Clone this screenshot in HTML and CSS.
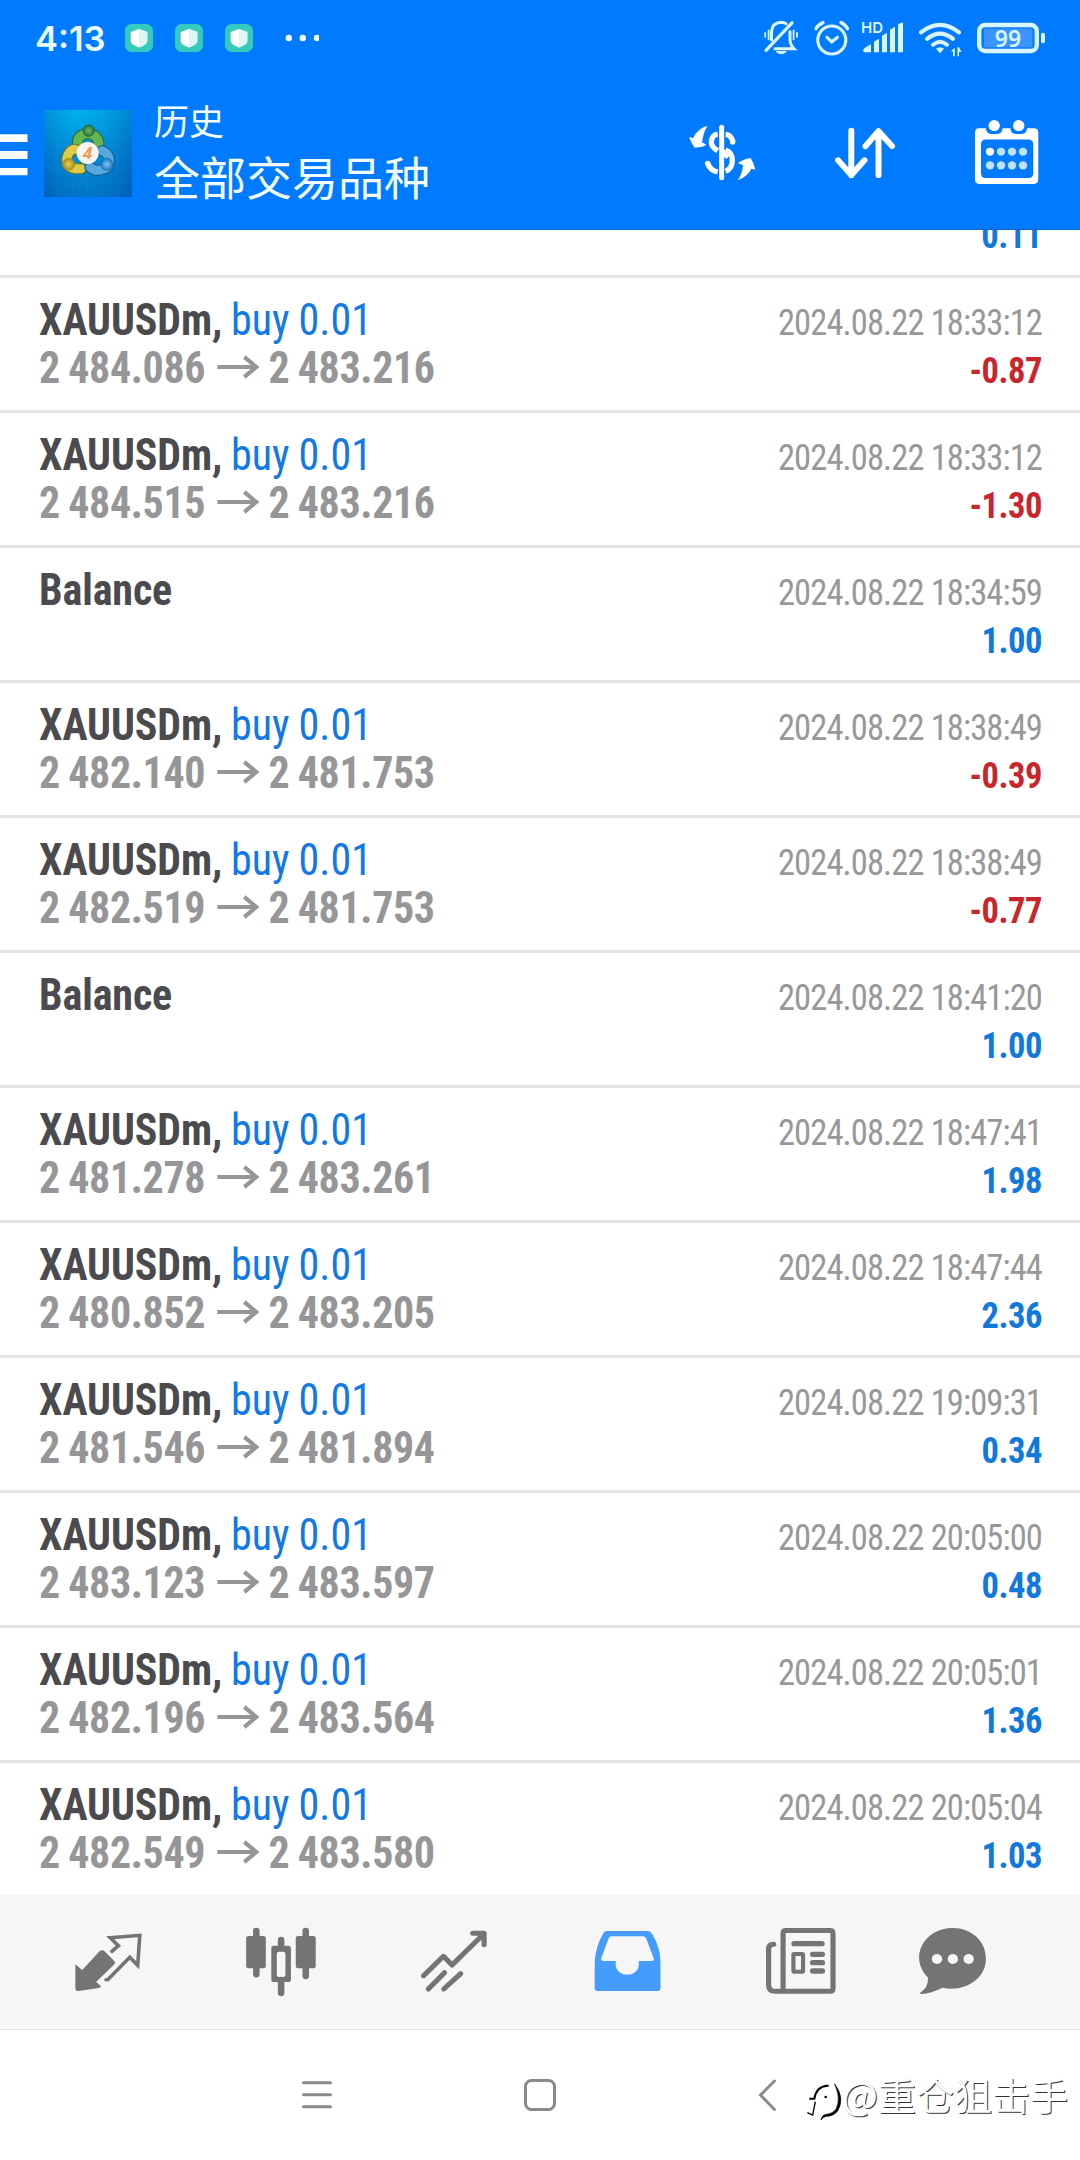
FILE: index.html
```html
<!DOCTYPE html>
<html lang="zh-CN">
<head>
<meta charset="utf-8">
<title>历史</title>
<link rel="stylesheet" href="styles.css">
</head>
<body>
<svg class="defs" width="0" height="0">
  <defs>
    <symbol id="arrow" viewBox="0 0 45 24"><path d="M0 12H42M29 2L42 12L29 22" fill="none" stroke="currentColor" stroke-width="4.200"/></symbol>
    <symbol id="shield" viewBox="0 0 28 28"><rect width="28" height="28" rx="6.500" fill="#35cbbc"/><path d="M14 5L22.300 8V17.500Q22 20.500 14 23.500Q6 20.500 5.700 17.500V8Z" fill="#fff"/><path d="M14 5L22.300 8V17.500Q22 20.500 14 23.500Z" fill="#dff5f5"/></symbol>
  </defs>
</svg>
<div class="screen">
  <header class="top">
    <div class="status">
      <span class="clock">4:13</span>
      <svg class="shield"><use href="#shield"/></svg>
      <svg class="shield"><use href="#shield"/></svg>
      <svg class="shield"><use href="#shield"/></svg>
      <svg class="more" viewBox="285 0 34 76" fill="#f4fcff"><circle cx="288.800" cy="38" r="3.200"/><circle cx="302.800" cy="38" r="3.200"/><circle cx="317" cy="38" r="3.200"/></svg>
      <svg class="sys" viewBox="755 1.200 305 76" width="305" height="76">
        <g fill="none" stroke="#d9f6ff" stroke-linecap="round">
          <path d="M771.500 41V33Q772 24 781 23.500Q784 23.500 786 25M775 50H794Q790 46 790 41V33" stroke-width="3"/>
          <path d="M766 51.500L792 24" stroke-width="3.200"/>
          <path d="M765.200 34V38M768.600 31.500V40.500M793.600 31.500V40.500M797 34V38" stroke-width="1.800"/>
          <path d="M776.500 53Q781 57 786 53Z" fill="#d9f6ff" stroke-width="1"/>
          <circle cx="831.800" cy="41.200" r="14" stroke-width="3.200"/>
          <path d="M827 38.500L831.800 43L837.500 38.500" stroke-width="3.200"/>
          <path d="M816 30Q818 26 823 23.800M841 23.800Q845.500 26 847.500 30" stroke-width="3.400"/>
          <path d="M921 33.500Q940 18.500 959 33.500" stroke-width="4.200"/>
          <path d="M927 40Q940 29.500 953 40" stroke-width="4.200"/>
          <path d="M933 46Q940 40 947 46" stroke-width="4"/>
          <rect x="979.200" y="26.200" width="57.600" height="26" rx="6" stroke-width="4.400"/>
        </g>
        <g fill="#d9f6ff">
          <path d="M936 50Q940 47 944 50L940 54.500Z"/>
          <path d="M951 52.500L954.800 49V57.500H953V53ZM957.500 48.500H959L961.500 53H959V57.500H957.500Z"/>
          <path d="M863 52Q863 49 871 45.500V53.500H864ZM874 43L879 40V53.500H874ZM882 37L887 34V53.500H882ZM890 31L895 28V53.500H890ZM898 26Q900 23.500 903 24V53.500H898Z"/>
          <text class="hd" x="861" y="33.800">HD</text>
          <rect x="984" y="29.800" width="48.500" height="18.800" fill="#3c94ff"/>
          <rect x="1041" y="34" width="4" height="10.500" rx="2"/>
          <text class="batt" x="1008" y="47.800" text-anchor="middle">99</text>
        </g>
      </svg>
    </div>
    <div class="appbar">
      <svg class="menu" viewBox="0 0 28 154" fill="#fff"><path d="M0 58.300H27.500V66H0ZM0 75H27.500V83H0ZM0 92H27.500V99.300H0Z"/></svg>
      <svg class="logo" viewBox="0 0 264 261">
        <defs>
          <linearGradient id="sky" x2="0" y2="1"><stop offset="0" stop-color="#00b0ea"/><stop offset=".5" stop-color="#0087d6"/><stop offset="1" stop-color="#0064b8"/></linearGradient>
          <linearGradient id="edge"><stop offset="0" stop-color="#0058b8" stop-opacity=".35"/><stop offset=".4" stop-color="#00b4f0" stop-opacity=".2"/><stop offset="1" stop-color="#0058b8" stop-opacity=".5"/></linearGradient>
          <radialGradient id="gg"><stop offset="0" stop-color="#6cb868"/><stop offset="1" stop-color="#28783a"/></radialGradient>
          <radialGradient id="gy"><stop offset="0" stop-color="#e8d25a"/><stop offset="1" stop-color="#a98c14"/></radialGradient>
          <radialGradient id="gb"><stop offset="0" stop-color="#7cc8f5"/><stop offset="1" stop-color="#1d78c4"/></radialGradient>
        </defs>
        <rect width="264" height="261" fill="url(#sky)"/><rect width="264" height="261" fill="url(#edge)"/>
        <path d="M40 0V261M85 0V261M130 0V261M175 0V261M220 0V261M0 43H264M0 87H264M0 130H264M0 174H264M0 218H264" stroke="#35b5ea" stroke-opacity=".18" stroke-width="2"/>
        <g fill="none" stroke-linecap="round">
          <path d="M101 98C99 64 163 58 164 104" stroke="#2b6740" stroke-width="35"/>
          <path d="M101 98C99 64 163 58 164 104" stroke="#64b653" stroke-width="28"/>
          <path d="M94 118C66 118 54 172 94 176H112" stroke="#65722f" stroke-width="34"/>
          <path d="M94 118C66 118 54 172 94 176H112" stroke="#dccb48" stroke-width="27"/>
          <path d="M174 122C206 136 198 170 184 175C158 186 148 180 138 172" stroke="#175d94" stroke-width="34"/>
          <path d="M174 122C206 136 198 170 184 175C158 186 148 180 138 172" stroke="#56a8de" stroke-width="27"/>
        </g>
        <circle cx="134" cy="62" r="17" fill="url(#gg)" stroke="#23683a" stroke-width="3"/>
        <circle cx="74" cy="163" r="18" fill="url(#gy)" stroke="#a08f22" stroke-width="2"/>
        <circle cx="189" cy="163" r="18" fill="url(#gb)" stroke="#1b68a4" stroke-width="2"/>
        <circle cx="131" cy="129" r="33" fill="#f8f4ef"/>
        <text class="four" x="131" y="148" text-anchor="middle">4</text>
      </svg>
      <div class="titles"><div class="sub">历史</div><div class="title">全部交易品种</div></div>
      <div class="actions">
        <svg viewBox="651 76 142 154"><g transform="translate(680 115) scale(.33333)" fill="#fff">
          <path d="M27 65L39 70Q52 40 83 32Q70 50 66 82L79 89Q72 96 44 98Q34 85 27 65Z"/>
          <path d="M174 144Q190 132 212 129Q222 145 226 164L214 161Q205 183 173 196Q188 174 189 151Z"/>
          <path d="M125 37V188" fill="none" stroke="#fff" stroke-width="15" stroke-linecap="round"/>
          <path d="M113 57Q94 61 94 83Q95 97 113 107M83 145Q90 166 113 171M137 58Q153 59 159 80M137 105Q157 112 157 137Q156 162 137 169" fill="none" stroke="#fff" stroke-width="16"/>
          <circle cx="158" cy="81" r="8"/><circle cx="83" cy="145" r="8"/><path d="M128 100L153 115L140 132L128 122Z"/>
        </g></svg>
        <svg preserveAspectRatio="none" viewBox="793 78.500 142 159.100" fill="none" stroke="#fff" stroke-width="6" stroke-linecap="round" stroke-linejoin="round"><path d="M851.300 135V181M838 165.500L851.300 181L864.500 165.500M878.500 181V135.500M865.500 151L878.500 135.500L892 151"/></svg>
        <svg preserveAspectRatio="none" viewBox="935 78.500 142 159.100" fill="#fff">
          <path fill-rule="evenodd" d="M979 132.500H1034Q1038.300 132.500 1038.300 137V185.500Q1038.300 190 1034 190H979Q975 190 975 185.500V137Q975 132.500 979 132.500ZM986 144Q981 144 981 149V179Q981 184 986 184H1028Q1033.300 184 1033.300 179V149Q1033.300 144 1028 144Z"/>
          <path d="M986 130H1002.400V134Q1001 138.500 997 138.500H991.500Q987.500 138.500 986 134ZM1010.500 130H1026.900V134Q1025.500 138.500 1021.500 138.500H1016Q1012 138.500 1010.500 134Z" fill="#007aff"/>
          <circle cx="994.200" cy="129.700" r="5.700"/><circle cx="1018.700" cy="129.700" r="5.700"/>
          <circle cx="990" cy="156.700" r="4.200"/>
          <g fill="#bfe2ff"><circle cx="1001" cy="156.700" r="4.200"/><circle cx="1012" cy="156.700" r="4.200"/><circle cx="1023" cy="156.700" r="4.200"/><circle cx="990" cy="170.800" r="4.200"/><circle cx="1001" cy="170.800" r="4.200"/><circle cx="1012" cy="170.800" r="4.200"/><circle cx="1023" cy="170.800" r="4.200"/></g>
        </svg>
      </div>
    </div>
  </header>

  <main class="list">
    <div class="row"><div class="l"></div><div class="r"><div class="date"></div><div class="val">0.11</div></div></div>
    <div class="row"><div class="l"><div><b>XAUUSDm,</b> <i>buy 0.01</i></div><div class="price">2 484.086<svg><use href="#arrow"/></svg>2 483.216</div></div><div class="r"><div class="date">2024.08.22 18:33:12</div><div class="val neg">-0.87</div></div></div>
    <div class="row"><div class="l"><div><b>XAUUSDm,</b> <i>buy 0.01</i></div><div class="price">2 484.515<svg><use href="#arrow"/></svg>2 483.216</div></div><div class="r"><div class="date">2024.08.22 18:33:12</div><div class="val neg">-1.30</div></div></div>
    <div class="row"><div class="l"><div><b>Balance</b></div></div><div class="r"><div class="date">2024.08.22 18:34:59</div><div class="val">1.00</div></div></div>
    <div class="row"><div class="l"><div><b>XAUUSDm,</b> <i>buy 0.01</i></div><div class="price">2 482.140<svg><use href="#arrow"/></svg>2 481.753</div></div><div class="r"><div class="date">2024.08.22 18:38:49</div><div class="val neg">-0.39</div></div></div>
    <div class="row"><div class="l"><div><b>XAUUSDm,</b> <i>buy 0.01</i></div><div class="price">2 482.519<svg><use href="#arrow"/></svg>2 481.753</div></div><div class="r"><div class="date">2024.08.22 18:38:49</div><div class="val neg">-0.77</div></div></div>
    <div class="row"><div class="l"><div><b>Balance</b></div></div><div class="r"><div class="date">2024.08.22 18:41:20</div><div class="val">1.00</div></div></div>
    <div class="row"><div class="l"><div><b>XAUUSDm,</b> <i>buy 0.01</i></div><div class="price">2 481.278<svg><use href="#arrow"/></svg>2 483.261</div></div><div class="r"><div class="date">2024.08.22 18:47:41</div><div class="val">1.98</div></div></div>
    <div class="row"><div class="l"><div><b>XAUUSDm,</b> <i>buy 0.01</i></div><div class="price">2 480.852<svg><use href="#arrow"/></svg>2 483.205</div></div><div class="r"><div class="date">2024.08.22 18:47:44</div><div class="val">2.36</div></div></div>
    <div class="row"><div class="l"><div><b>XAUUSDm,</b> <i>buy 0.01</i></div><div class="price">2 481.546<svg><use href="#arrow"/></svg>2 481.894</div></div><div class="r"><div class="date">2024.08.22 19:09:31</div><div class="val">0.34</div></div></div>
    <div class="row"><div class="l"><div><b>XAUUSDm,</b> <i>buy 0.01</i></div><div class="price">2 483.123<svg><use href="#arrow"/></svg>2 483.597</div></div><div class="r"><div class="date">2024.08.22 20:05:00</div><div class="val">0.48</div></div></div>
    <div class="row"><div class="l"><div><b>XAUUSDm,</b> <i>buy 0.01</i></div><div class="price">2 482.196<svg><use href="#arrow"/></svg>2 483.564</div></div><div class="r"><div class="date">2024.08.22 20:05:01</div><div class="val">1.36</div></div></div>
    <div class="row"><div class="l"><div><b>XAUUSDm,</b> <i>buy 0.01</i></div><div class="price">2 482.549<svg><use href="#arrow"/></svg>2 483.580</div></div><div class="r"><div class="date">2024.08.22 20:05:04</div><div class="val">1.03</div></div></div>
  </main>

  <nav class="tabs">
    <svg preserveAspectRatio="none" viewBox="64 45 502.400 405">
      <path d="M219 253L239 270L289 214Q297 207 304 214L331 242Q337 248 331 254L279 306L293 318Q293 323 288 324L228 333Q219 334 219 325Z" fill="#747474"/>
      <path d="M325 214L344 197L320 173L406 166L400 256L377 232L313 299H308" fill="none" stroke="#747474" stroke-width="10.500" stroke-linecap="round"/>
    </svg>
    <svg preserveAspectRatio="none" viewBox="566.400 45 502.400 405" fill="#747474">
      <rect x="715" y="168" width="57" height="97" rx="7"/><rect x="859" y="168" width="58" height="97" rx="7"/>
      <path d="M744.500 153V283M888 153V288M816.500 180V204M816.500 300V339" stroke="#747474" stroke-width="19" stroke-linecap="round"/>
      <path fill-rule="evenodd" d="M796 197H837Q845 197 845 205V299Q845 306 837 306H796Q788 306 788 299V205Q788 197 796 197ZM812 215Q804 215 804 222V285Q804 291 810 291H822Q829 291 829 285V222Q829 215 822 215Z"/>
    </svg>
    <svg preserveAspectRatio="none" viewBox="1068.800 45 502.400 405" fill="none" stroke="#747474" stroke-width="15" stroke-linecap="round" stroke-linejoin="round">
      <path d="M1230 287L1288 229L1313 255L1404 163M1373 160H1406V194M1244 327L1291 278M1289 327L1338 281"/>
    </svg>
    <svg preserveAspectRatio="none" viewBox="3 45 502.400 405" fill="#459cff">
      <path fill-rule="evenodd" d="M193 153H313Q320 153 326 162Q350 203 350 248V324Q350 333 341 333H168Q159 333 159 324V248Q161 200 184 160Q188 153 193 153ZM208 169Q202 169 199 176L178 234Q176 242 184 243H220V254C222 294 285 294 287 254V243H325Q332 242 330 234L309 177Q306 169 300 169Z"/>
    </svg>
    <svg preserveAspectRatio="none" viewBox="505.400 45 502.400 405" fill="none" stroke="#747474" stroke-width="15" stroke-linecap="round">
      <path d="M714 151.500H842Q851 151.500 851 160V325Q851 334 842 334H714Q706 334 706 325V160Q706 151.500 714 151.500ZM714 334H684Q664 334 664 314V207Q664 193 679 193"/>
      <path d="M738 191H819M792 223H820M792 248H820M792 273H820" stroke-width="16"/>
      <rect x="736" y="222" width="28" height="53" rx="2" stroke-width="12"/>
    </svg>
    <svg preserveAspectRatio="none" viewBox="1007.800 45 502.400 405">
      <path d="M1199 144C1252 144 1295 182 1295 236C1295 299 1230 337 1169 323Q1136 341 1106 342Q1101 340 1107 336Q1128 322 1127 293C1068 230 1117 144 1199 144Z" fill="#747474"/>
      <g fill="#f6f6f6"><circle cx="1153" cy="237" r="15"/><circle cx="1199" cy="237" r="15"/><circle cx="1245" cy="237" r="15"/></g>
    </svg>
  </nav>

  <footer class="sysnav">
    <svg viewBox="0 2030 430 130" width="430" height="130"><path d="M303.500 2082.700H330.500M303.500 2094.700H330.500M303.500 2106.700H330.500"/></svg>
    <svg viewBox="430 2030 220 130" width="220" height="130"><rect x="525.500" y="2080.500" width="29" height="29" rx="6"/></svg>
    <svg viewBox="650 2030 230 130" width="230" height="130"><path d="M774.500 2081L760.500 2095L774.500 2109.500"/></svg>
    <div class="mark">
      <svg viewBox="35 65 105 130" width="35" height="43.330" fill="none" stroke="#000" stroke-width="6">
        <path d="M42 124H57Q63 87 96 85H100"/><path d="M60 133L52 173L36 166" stroke-width="4"/>
        <path d="M118 80Q150 122 127 161Q113 178 92 177Q82 180 77 188Q80 172 95 171Q112 169 122 156Q138 124 118 80Z" fill="#000" stroke-width="2"/><circle cx="91" cy="119" r="4" fill="#000" stroke="none"/>
      </svg>
      <span>@重仓狙击手</span>
    </div>
  </footer>
</div>
</body>
</html>
```
FILE: styles.css
```css
* { box-sizing: border-box; }
body { margin: 0; background: #fff; font-family: "Roboto Condensed", Roboto, "Noto Sans CJK SC", sans-serif; }
svg { display: block; flex: none; }
.defs { position: absolute; }
.screen { width: 1080px; height: 2160px; display: flex; flex-direction: column; overflow: hidden; }

.top { height: 230px; flex: none; background: #007aff; border-bottom: 1px solid #1069c9; }
.status { height: 76px; display: flex; align-items: center; padding: 0 20px 0 35px; }
.clock { width: 90px; font: 600 34.5px/76px Inter, sans-serif; color: #e8faff; padding-top: 2px; }
.shield { width: 28px; height: 28px; margin: 0 22px 0 0; }
.more { width: 34px; height: 76px; margin-left: 10px; }
.sys { margin-left: auto; }
.hd { font: 600 15px Inter, sans-serif; }
.batt { font: 600 23px "Noto Sans", sans-serif; }

.appbar { height: 153px; display: flex; }
.menu { width: 28px; height: 154px; }
.logo { width: 88px; height: 87px; margin: 33.5px 22px 0 16px; }
.four { font: italic 700 50px "Noto Sans", sans-serif; fill: #ee9a55; }
.titles { font-family: "Noto Sans CJK SC", sans-serif; color: #f2fdff; padding-top: 21px; }
.sub { font-size: 35px; line-height: 46px; }
.title { font-size: 46px; line-height: 64px; }
.actions { display: flex; margin: 0 3px 0 auto; }
.actions svg { width: 142px; height: 154px; }

.list { height: 1665px; flex: none; display: flex; flex-direction: column; justify-content: flex-end; overflow: hidden; }
.row { height: 135px; flex: none; border-top: 3px solid #e3e3e3; padding: 18px 38px 0 39px; display: flex; justify-content: space-between; white-space: nowrap; }
.l { font-size: 45px; line-height: 48px; color: #4b4b4f; word-spacing: -1px; transform: scaleX(.933); transform-origin: 0 0; }
.l b { letter-spacing: -.1px; }
.l i { font-style: normal; color: #1178e4; letter-spacing: .1px; }
.price { display: flex; align-items: center; font-weight: 700; color: #969698; letter-spacing: -.4px; }
.price svg { width: 45px; height: 24px; margin: -3px 10.5px 0 12.5px; }
.r { font-size: 37px; line-height: 48px; text-align: right; padding-top: 3px; transform: scaleX(.933); transform-origin: 100% 0; }
.date { height: 48px; color: #98989a; letter-spacing: -.95px; }
.val { font-weight: 700; color: #1178dc; letter-spacing: -.5px; }
.neg { color: #c9262b; }

.tabs { height: 135px; flex: none; display: flex; padding-left: 22px; background: linear-gradient(#f6f6f6 130px, #f9f9f9 130px, #f9f9f9 134px, #e2e2e2 134px); }
.tabs svg { width: 173px; height: 135px; }

.sysnav { position: relative; height: 130px; display: flex; background: #fff; }
.sysnav > svg { fill: none; stroke: #8a8a8a; stroke-width: 3; stroke-linecap: round; }
.mark { position: absolute; left: 807px; top: 35px; display: flex; align-items: center; font: 38px/54px "Noto Sans CJK SC", sans-serif; color: #fff; text-shadow: 1px 1px 0 #333; white-space: nowrap; }
.mark svg { margin-top: 14px; }
```
